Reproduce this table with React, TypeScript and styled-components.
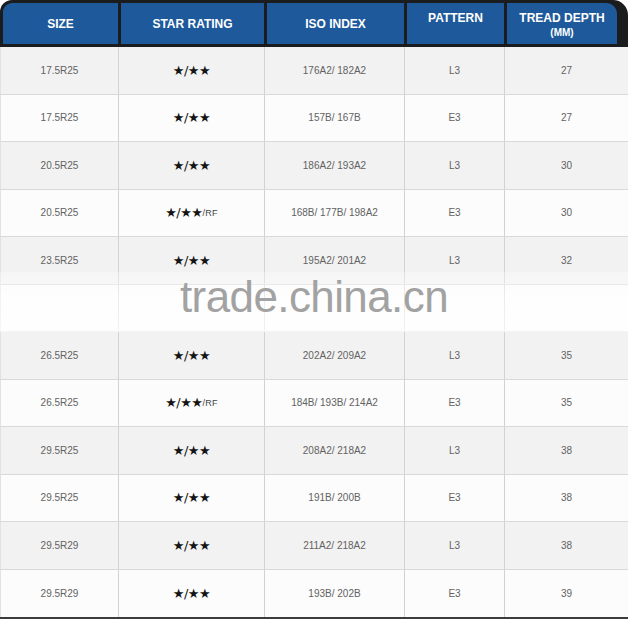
import styled, { createGlobalStyle } from "styled-components";

const GlobalStyle = createGlobalStyle`
  html, body {
    margin: 0;
    padding: 0;
    background: #ffffff;
  }
  body {
    font-family: "Liberation Sans", Arial, sans-serif;
  }
`;

interface TyreRow {
  size: string;
  rf?: boolean;
  iso: string;
  pattern: string;
  depth: string;
}

// row 6 is hidden under the watermark in the original
const rows: Array<TyreRow | null> = [
  { size: "17.5R25", iso: "176A2/ 182A2", pattern: "L3", depth: "27" },
  { size: "17.5R25", iso: "157B/ 167B", pattern: "E3", depth: "27" },
  { size: "20.5R25", iso: "186A2/ 193A2", pattern: "L3", depth: "30" },
  { size: "20.5R25", rf: true, iso: "168B/ 177B/ 198A2", pattern: "E3", depth: "30" },
  { size: "23.5R25", iso: "195A2/ 201A2", pattern: "L3", depth: "32" },
  null,
  { size: "26.5R25", iso: "202A2/ 209A2", pattern: "L3", depth: "35" },
  { size: "26.5R25", rf: true, iso: "184B/ 193B/ 214A2", pattern: "E3", depth: "35" },
  { size: "29.5R25", iso: "208A2/ 218A2", pattern: "L3", depth: "38" },
  { size: "29.5R25", iso: "191B/ 200B", pattern: "E3", depth: "38" },
  { size: "29.5R29", iso: "211A2/ 218A2", pattern: "L3", depth: "38" },
  { size: "29.5R29", iso: "193B/ 202B", pattern: "E3", depth: "39" },
];

export default function App() {
  return (
    <>
      <GlobalStyle />
      <Page>
        <Header>
          <HeadCell $first>SIZE</HeadCell>
          <HeadCell>STAR RATING</HeadCell>
          <HeadCell>ISO INDEX</HeadCell>
          <HeadCell $top>PATTERN</HeadCell>
          <HeadCell $top $last>
            TREAD DEPTH
            <Unit>(MM)</Unit>
          </HeadCell>
        </Header>

        <Body>
          {rows.map((row, i) => (
            <Row key={i} $odd={i % 2 === 0}>
              <Cell>{row?.size}</Cell>
              <Cell>
                {row && (
                  <Stars>
                    ★/★★{row.rf && <Rf>/RF</Rf>}
                  </Stars>
                )}
              </Cell>
              <Cell>{row?.iso}</Cell>
              <Cell>{row?.pattern}</Cell>
              <Cell>{row?.depth}</Cell>
            </Row>
          ))}
        </Body>

        <Watermark>
          <WatermarkText>trade.china.cn</WatermarkText>
        </Watermark>
      </Page>
    </>
  );
}

const Page = styled.div`
  position: relative;
  width: 628px;
  height: 620px;
  overflow: hidden;
  background: #ffffff;
`;

const Header = styled.div`
  display: grid;
  grid-template-columns: 115px 143px 137px 97px 110px;
  column-gap: 3px;
  height: 47px;
  box-sizing: border-box;
  padding: 3px 11px 3px 3px;
  background: #1b1c1e;
  border-radius: 12px 15px 0 0;
`;

const HeadCell = styled.div<{ $first?: boolean; $last?: boolean; $top?: boolean }>`
  display: flex;
  flex-direction: column;
  align-items: center;
  justify-content: ${({ $top }) => ($top ? "flex-start" : "center")};
  padding-top: ${({ $top }) => ($top ? "8px" : "0")};
  background: #1e5a9b;
  color: #ffffff;
  font-size: 12px;
  font-weight: 700;
  line-height: 14px;
  border-radius: ${({ $first, $last }) =>
    $first ? "9px 0 0 0" : $last ? "0 11px 0 0" : "0"};
`;

const Unit = styled.span`
  font-size: 10px;
  line-height: 13px;
  margin-top: 1px;
`;

const Body = styled.div`
  display: flex;
  flex-direction: column;
  border-bottom: 2px solid #3c3c3c;
`;

const Row = styled.div<{ $odd: boolean }>`
  display: grid;
  grid-template-columns: 119px 146px 140px 100px 1fr;
  height: 47.5px;
  box-sizing: border-box;
  background: ${({ $odd }) => ($odd ? "#f2f2f2" : "#fcfcfc")};
  border-bottom: 1px solid #d9d9d9;

  &:last-child {
    border-bottom: none;
  }
`;

const Cell = styled.div`
  display: flex;
  align-items: center;
  justify-content: center;
  border-right: 1px solid #d2d2d2;
  color: #626262;
  font-size: 10px;

  &:first-child {
    border-left: 1px solid #e2e2e2;
  }
  &:last-child {
    border-right: none;
  }
`;

const Stars = styled.span`
  font-family: "DejaVu Sans", sans-serif;
  font-size: 13px;
  color: #151515;
  letter-spacing: -0.5px;
`;

const Rf = styled.span`
  font-family: "Liberation Sans", Arial, sans-serif;
  font-size: 9px;
  color: #444;
  letter-spacing: 0.3px;
  position: relative;
  top: -1px;
`;

const Watermark = styled.div`
  position: absolute;
  left: 0;
  right: 0;
  top: 272px;
  height: 60px;
  display: flex;
  justify-content: center;
  align-items: flex-start;
  background: linear-gradient(
    to bottom,
    rgba(255, 255, 255, 0.3) 0%,
    rgba(255, 255, 255, 0.55) 40%,
    rgba(255, 255, 255, 0.7) 100%
  );
  pointer-events: none;
`;

const WatermarkText = styled.span`
  font-family: "Liberation Sans", Arial, sans-serif;
  font-size: 44px;
  line-height: 1;
  margin-top: 3px;
  color: #a2a2a2;
  letter-spacing: -0.6px;
`;
